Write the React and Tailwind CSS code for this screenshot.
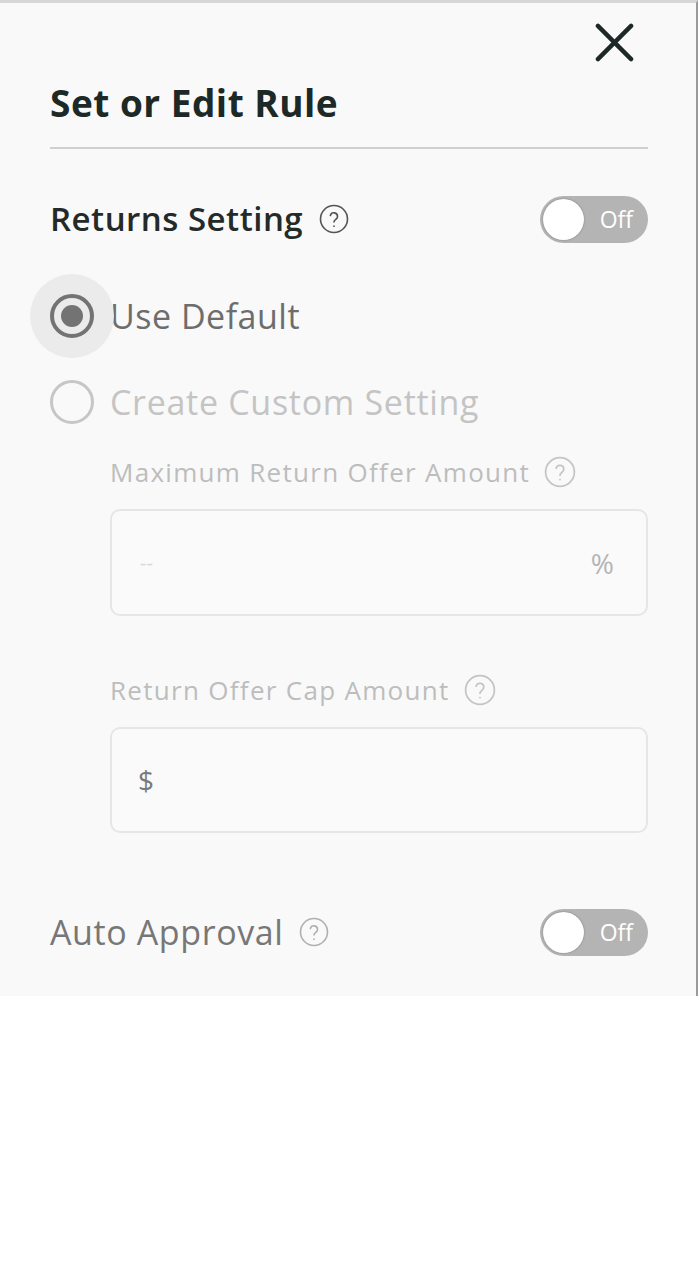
const HelpIcon = ({ className = '' }) => (
  <svg className={className} viewBox="0 0 24 24" fill="none" stroke="currentColor" strokeWidth="1.3" strokeLinecap="round">
    <circle cx="12" cy="12" r="10.8" />
    <path d="M9.1 9.2a2.9 2.9 0 0 1 5.7.9c0 2-2.8 2.3-2.8 4.3" />
    <circle cx="12" cy="17.7" r="0.7" fill="currentColor" stroke="none" />
  </svg>
);

const Toggle = () => (
  <div className="w-[108px] h-[47px] rounded-full bg-[#b4b4b4] flex items-center pl-[3px] pr-[15px]">
    <div className="w-[41px] h-[41px] rounded-full bg-white shadow-[0_0_2px_rgba(0,0,0,0.35)]" />
    <span className="ml-auto text-[23px] text-white leading-none">Off</span>
  </div>
);

export default function App() {
  return (
    <div className="min-h-screen bg-white font-['Open_Sans',sans-serif]">
      <div className="h-[996px] bg-[#f9f9f9] border-t-[3px] border-[#d6d6d6] border-r-2 border-r-[#9a9a9a] pl-[50px] pr-[48px]">
        <div className="h-[78px] flex items-center justify-end pr-[14px]">
          <svg className="w-[39px] h-[39px] text-[#1c2926]" viewBox="0 0 40 40" fill="none" stroke="currentColor" strokeWidth="4.5" strokeLinecap="round">
            <path d="M3 3l34 34M37 3L3 37" />
          </svg>
        </div>

        <div className="h-[44px] flex items-center">
          <h1 className="text-[37px] font-bold text-[#1c2926] tracking-[0.5px]">Set or Edit Rule</h1>
        </div>
        <div className="mt-[22px] h-[2px] bg-[#cfcfcf]" />

        <div className="mt-[47px] h-[46px] flex items-center justify-between">
          <div className="flex items-center gap-[16px]">
            <span className="text-[33px] font-semibold text-[#232a28] tracking-[0.5px]">Returns Setting</span>
            <HelpIcon className="w-[30px] h-[30px] text-[#555]" />
          </div>
          <Toggle />
        </div>

        <div className="mt-[31px] h-[86px] flex items-center">
          <div className="relative w-[44px] h-[44px]">
            <div className="absolute -inset-[20px] rounded-full bg-[#ebebeb]" />
            <div className="relative w-[44px] h-[44px] rounded-full border-[4px] border-[#737373] flex items-center justify-center">
              <div className="w-[22px] h-[22px] rounded-full bg-[#737373]" />
            </div>
          </div>
          <span className="ml-[16px] text-[34px] font-medium text-[#6d6d6d] tracking-[0.5px]">Use Default</span>
        </div>

        <div className="h-[86px] flex items-center">
          <div className="w-[44px] h-[44px] rounded-full border-[3px] border-[#c6c6c6]" />
          <span className="ml-[16px] text-[34px] font-medium text-[#c4c4c4] tracking-[0.7px]">Create Custom Setting</span>
        </div>

        <div className="pl-[60px]">
          <div className="mt-[9px] h-[36px] flex items-center gap-[14px]">
            <span className="text-[26px] text-[#bdbdbd] tracking-[1.3px]">Maximum Return Offer Amount</span>
            <HelpIcon className="w-[32px] h-[32px] text-[#c4c4c4]" />
          </div>
          <div className="mt-[19px] h-[107px] rounded-[10px] border-2 border-[#e6e6e6] bg-[#fafafa] flex items-center justify-between pl-[28px] pr-[32px]">
            <span className="text-[20px] text-[#d8d8d8]">--</span>
            <span className="text-[28px] text-[#b5b5b5]">%</span>
          </div>

          <div className="mt-[56px] h-[36px] flex items-center gap-[14px]">
            <span className="text-[26px] text-[#bdbdbd] tracking-[1.3px]">Return Offer Cap Amount</span>
            <HelpIcon className="w-[32px] h-[32px] text-[#c4c4c4]" />
          </div>
          <div className="mt-[19px] h-[106px] rounded-[10px] border-2 border-[#e6e6e6] bg-[#fafafa] flex items-center pl-[26px]">
            <span className="text-[28px] text-[#7a7a7a]">$</span>
          </div>
        </div>

        <div className="mt-[76px] h-[46px] flex items-center justify-between">
          <div className="flex items-center gap-[16px]">
            <span className="text-[34px] font-medium text-[#777] tracking-[0.6px]">Auto Approval</span>
            <HelpIcon className="w-[30px] h-[30px] text-[#b0b0b0]" />
          </div>
          <Toggle />
        </div>
      </div>
    </div>
  );
}
